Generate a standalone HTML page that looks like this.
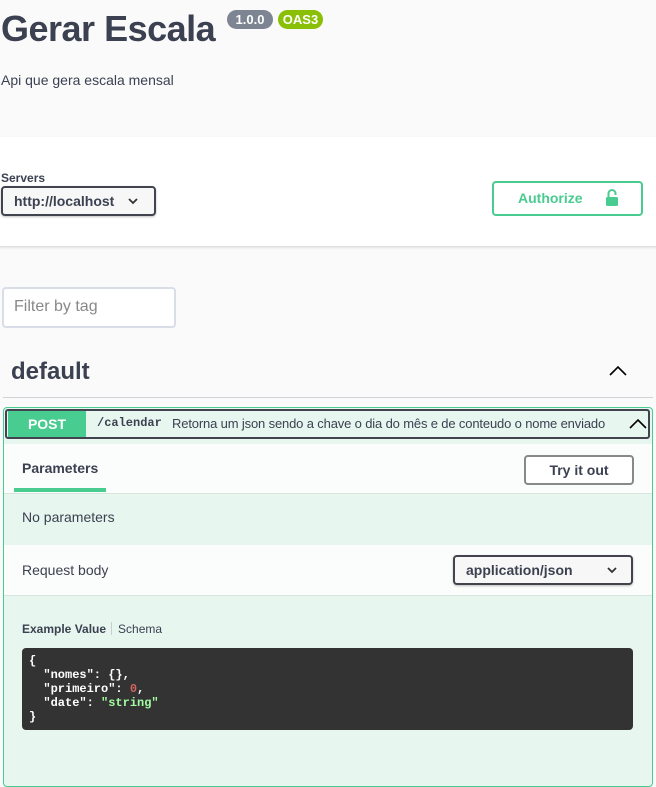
<!DOCTYPE html>
<html><head><style>
*{box-sizing:border-box;margin:0;padding:0}
body{width:656px;height:770px;overflow:hidden;background:#fafafa;font-family:"Liberation Sans",sans-serif;color:#3b4151;position:relative}
.a{position:absolute}
.badge{position:absolute;top:10px;height:19px;border-radius:57px;color:#fff;font-weight:bold;font-size:13px;line-height:19px;text-align:center}
.sel{position:absolute;border:2px solid #41444e;border-radius:4px;background:#f7f7f7;font-weight:bold;font-size:14px;box-shadow:0 1px 2px rgba(0,0,0,.25)}
</style></head><body>
<div class="a" style="left:1px;top:8px;font-size:36px;font-weight:bold;letter-spacing:-0.5px">Gerar Escala</div>
<div class="badge" style="left:227px;width:46px;background:#7d8492">1.0.0</div>
<div class="badge" style="left:278px;width:45px;background:#89bf04">OAS3</div>
<div class="a" style="left:1px;top:72px;font-size:14px">Api que gera escala mensal</div>

<div class="a" style="left:0;top:137px;width:656px;height:110px;background:#fff;border-bottom:1px solid #e0e0e0;box-shadow:0 1px 2px rgba(0,0,0,.1)"></div>
<div class="a" style="left:1px;top:171px;font-size:12px;font-weight:bold">Servers</div>
<div class="sel" style="left:1px;top:186px;width:155px;height:30px;padding:5px 0 0 11px">http://localhost<svg class="a" style="left:125px;top:10px" width="10" height="7" viewBox="0 0 10 7"><path d="M1 1l4 4 4-4" stroke="#333" stroke-width="1.8" fill="none"/></svg></div>
<div class="a" style="left:492px;top:181px;width:151px;height:35px;border:2px solid #49cc90;border-radius:4px;color:#49cc90;font-weight:bold;font-size:14px;padding:7px 0 0 24px">Authorize
<svg class="a" style="left:111px;top:5px" width="14" height="20" viewBox="0 0 14 20"><path d="M3.5 9V5.5a3.5 3.5 0 0 1 7 0V7" stroke="#49cc90" stroke-width="2" fill="none"/><rect x="1" y="9" width="12" height="9" rx="1.5" fill="#49cc90"/></svg></div>

<div class="a" style="left:2px;top:287px;width:174px;height:41px;border:2px solid #d8dde7;border-radius:4px;background:#fff;color:#888;font-size:16px;padding:9px 0 0 10px">Filter by tag</div>

<div class="a" style="left:11px;top:358px;font-size:24px;font-weight:bold">default</div>
<svg class="a" style="left:608px;top:365px" width="20" height="12" viewBox="0 0 20 12"><path d="M2 10l8-8 8 8" stroke="#000" stroke-width="1.6" fill="none"/></svg>
<div class="a" style="left:3px;top:397px;width:650px;height:1px;background:#cfd2d6"></div>

<div class="a" style="left:3px;top:407px;width:650px;height:380px;border:1px solid #49cc90;border-radius:4px;background:#e8f6f0"></div>
<div class="a" style="left:5px;top:409px;width:645px;height:30px;border:2px solid #41444e;border-radius:3px"></div>
<div class="a" style="left:8px;top:411px;width:78px;height:26px;background:#49cc90;color:#fff;font-weight:bold;font-size:14px;text-align:center;line-height:26px">POST</div>
<div class="a" style="left:97px;top:416px;font-family:'Liberation Mono',monospace;font-weight:bold;font-size:12px">/calendar</div>
<div class="a" style="left:172px;top:416px;font-size:13px;letter-spacing:-0.15px;white-space:nowrap">Retorna um json sendo a chave o dia do mês e de conteudo o nome enviado</div>
<svg class="a" style="left:628px;top:417px" width="20" height="13" viewBox="0 0 20 13"><path d="M2 11l8-8 8 8" stroke="#000" stroke-width="1.6" fill="none"/></svg>

<div class="a" style="left:4px;top:444px;width:648px;height:50px;background:rgba(255,255,255,.8);border-bottom:1px solid #d8e6e0"></div>
<div class="a" style="left:22px;top:460px;font-size:14px;font-weight:bold">Parameters</div>
<div class="a" style="left:14px;top:488px;width:92px;height:4px;background:#49cc90"></div>
<div class="a" style="left:524px;top:455px;width:110px;height:30px;border:2px solid #888;border-radius:4px;background:#fff;font-weight:bold;font-size:14px;text-align:center;line-height:26px">Try it out</div>
<div class="a" style="left:22px;top:509px;font-size:14px">No parameters</div>

<div class="a" style="left:4px;top:545px;width:648px;height:51px;background:rgba(255,255,255,.8);border-bottom:1px solid #d8e6e0"></div>
<div class="a" style="left:22px;top:562px;font-size:14px">Request body</div>
<div class="sel" style="left:453px;top:555px;width:180px;height:30px;padding:5px 0 0 11px">application/json<svg class="a" style="left:152px;top:10px" width="10" height="7" viewBox="0 0 10 7"><path d="M1 1l4 4 4-4" stroke="#333" stroke-width="1.8" fill="none"/></svg></div>

<div class="a" style="left:22px;top:622px;font-size:12px;white-space:nowrap"><b>Example Value</b><span style="display:inline-block;width:1px;height:13px;background:#ccc;margin:0 6px -2px 5px"></span>Schema</div>
<div class="a" style="left:22px;top:648px;width:611px;height:82px;background:#333;border-radius:4px;padding:6px 7px;font-family:'Liberation Mono',monospace;font-weight:bold;font-size:12px;line-height:14px;color:#fff;white-space:pre">{
  "nomes": {},
  "primeiro": <span style="color:#d36363">0</span>,
  "date": <span style="color:#a2fca2">"string"</span>
}</div>
</body></html>
